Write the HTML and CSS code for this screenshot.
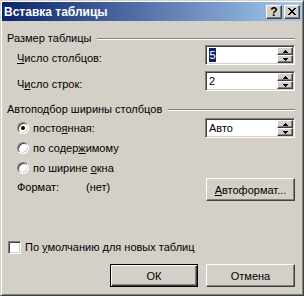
FILE: index.html
```html
<!DOCTYPE html>
<html lang="ru">
<head>
  <meta charset="UTF-8">
  <meta name="viewport" content="width=device-width, initial-scale=1.0">
  <title>Вставка таблицы</title>
  <link rel="stylesheet" href="styles.css">
</head>
<body>
  <div class="dialog">
    <div class="titlebar">
      <span class="title">Вставка таблицы</span>
      <div class="caption-btns">
        <span class="cap-btn help">?</span>
        <span class="cap-btn close">
          <svg width="8" height="7" viewBox="0 0 8 7" shape-rendering="crispEdges">
            <rect x="0" y="0" width="2" height="1"/><rect x="6" y="0" width="2" height="1"/>
            <rect x="1" y="1" width="2" height="1"/><rect x="5" y="1" width="2" height="1"/>
            <rect x="2" y="2" width="4" height="1"/>
            <rect x="3" y="3" width="2" height="1"/>
            <rect x="2" y="4" width="4" height="1"/>
            <rect x="1" y="5" width="2" height="1"/><rect x="5" y="5" width="2" height="1"/>
            <rect x="0" y="6" width="2" height="1"/><rect x="6" y="6" width="2" height="1"/>
          </svg>
        </span>
      </div>
    </div>

    <div class="content">
      <div class="group-head"><span>Размер таблицы</span><span class="etch"></span></div>

      <div class="field-row">
        <span class="label"><u>Ч</u>исло столбцов:</span>
        <div class="spin">
          <span class="value"><span class="sel">5</span></span>
          <div class="spin-btns">
            <span class="spin-btn"><svg width="5" height="3" shape-rendering="crispEdges"><rect x="2" y="0" width="1" height="1"/><rect x="1" y="1" width="3" height="1"/><rect x="0" y="2" width="5" height="1"/></svg></span>
            <span class="spin-btn"><svg width="5" height="3" shape-rendering="crispEdges"><rect x="0" y="0" width="5" height="1"/><rect x="1" y="1" width="3" height="1"/><rect x="2" y="2" width="1" height="1"/></svg></span>
          </div>
        </div>
      </div>

      <div class="field-row second">
        <span class="label">Ч<u>и</u>сло строк:</span>
        <div class="spin">
          <span class="value">2</span>
          <div class="spin-btns">
            <span class="spin-btn"><svg width="5" height="3" shape-rendering="crispEdges"><rect x="2" y="0" width="1" height="1"/><rect x="1" y="1" width="3" height="1"/><rect x="0" y="2" width="5" height="1"/></svg></span>
            <span class="spin-btn"><svg width="5" height="3" shape-rendering="crispEdges"><rect x="0" y="0" width="5" height="1"/><rect x="1" y="1" width="3" height="1"/><rect x="2" y="2" width="1" height="1"/></svg></span>
          </div>
        </div>
      </div>

      <div class="group-head second-group"><span>Автоподбор ширины столбцов</span><span class="etch"></span></div>

      <div class="radio-row first-radio">
        <label class="radio-label"><span class="radio checked"></span><span>посто<u>я</u>нная:</span></label>
        <div class="spin">
          <span class="value">Авто</span>
          <div class="spin-btns">
            <span class="spin-btn"><svg width="5" height="3" shape-rendering="crispEdges"><rect x="2" y="0" width="1" height="1"/><rect x="1" y="1" width="3" height="1"/><rect x="0" y="2" width="5" height="1"/></svg></span>
            <span class="spin-btn"><svg width="5" height="3" shape-rendering="crispEdges"><rect x="0" y="0" width="5" height="1"/><rect x="1" y="1" width="3" height="1"/><rect x="2" y="2" width="1" height="1"/></svg></span>
          </div>
        </div>
      </div>
      <div class="radio-row">
        <label class="radio-label"><span class="radio"></span><span>по содер<u>ж</u>имому</span></label>
      </div>
      <div class="radio-row">
        <label class="radio-label"><span class="radio"></span><span>по ширине <u>о</u>кна</span></label>
      </div>

      <div class="format-row">
        <span class="format-label">Формат:</span>
        <span class="format-value">(нет)</span>
        <button class="btn autoformat"><u>А</u>втоформат...</button>
      </div>

      <label class="check-row"><span class="checkbox"></span><span>По <u>у</u>молчанию для новых таблиц</span></label>

      <div class="actions">
        <button class="btn default">ОК</button>
        <button class="btn">Отмена</button>
      </div>
    </div>
  </div>
</body>
</html>
```

FILE: styles.css
```css
body {
  margin: 0;
  font-family: "Liberation Sans", Arial, sans-serif;
  font-size: 11px;
  color: #000;
  background-color: #d4d0c8;
}
.dialog {
  width: 304px;
  height: 296px;
  box-sizing: border-box;
  padding: 1px;
  background-color: #d4d0c8;
  border-top: 1px solid #d4d0c8;
  border-left: 1px solid #d4d0c8;
  border-right: 1px solid #404040;
  border-bottom: 1px solid #404040;
  box-shadow: inset 1px 1px #fff, inset -1px -1px #808080;
}
.titlebar {
  height: 19px;
  display: flex;
  align-items: center;
  justify-content: space-between;
  padding: 0 2px 0 2px;
  background: linear-gradient(to right, #0a246a, #a6caf0);
}
.title {
  color: #fff;
  font-weight: bold;
  font-size: 12px;
}
.caption-btns {
  display: flex;
  gap: 2px;
}
.cap-btn {
  width: 16px;
  height: 14px;
  box-sizing: border-box;
  display: flex;
  align-items: center;
  justify-content: center;
  background-color: #d4d0c8;
  border-top: 1px solid #fff;
  border-left: 1px solid #fff;
  border-right: 1px solid #404040;
  border-bottom: 1px solid #404040;
  box-shadow: inset -1px -1px #808080;
}
.help {
  font-weight: bold;
  font-size: 12px;
  line-height: 12px;
}
.close svg {
  fill: #000;
}
.content {
  padding: 11px 7px 0 5px;
}
.group-head {
  height: 13px;
  line-height: 13px;
  display: flex;
  align-items: center;
  gap: 6px;
}
.etch {
  flex: 1;
  height: 0;
  border-top: 1px solid #808080;
  border-bottom: 1px solid #fff;
}
.second-group {
  margin-top: 12px;
}
.field-row {
  display: flex;
  justify-content: space-between;
  align-items: flex-start;
  padding-left: 10px;
}
.field-row.second {
  margin-top: 6px;
}
.label {
  line-height: 13px;
  padding-top: 7px;
}
.spin {
  width: 90px;
  height: 20px;
  box-sizing: border-box;
  display: flex;
  background-color: #fff;
  border-top: 1px solid #808080;
  border-left: 1px solid #808080;
  border-right: 1px solid #fff;
  border-bottom: 1px solid #fff;
  box-shadow: inset 1px 1px #404040, inset -1px -1px #d4d0c8;
  padding: 1px;
}
.value {
  flex: 1;
  display: flex;
  align-items: center;
  padding-left: 2px;
  line-height: 14px;
}
.sel {
  display: inline-block;
  height: 14px;
  padding: 0 0.5px;
  background-color: #0a246a;
  color: #fff;
}
.spin-btns {
  width: 16px;
  display: flex;
  flex-direction: column;
}
.spin-btn {
  flex: 1;
  box-sizing: border-box;
  display: flex;
  align-items: center;
  justify-content: center;
  background-color: #d4d0c8;
  border-top: 1px solid #fff;
  border-left: 1px solid #fff;
  border-right: 1px solid #404040;
  border-bottom: 1px solid #404040;
  box-shadow: inset -1px -1px #808080;
}
.spin-btn svg {
  fill: #000;
}
.radio-row {
  height: 20px;
  display: flex;
  align-items: center;
  justify-content: space-between;
  padding-left: 10px;
}
.first-radio {
  margin-top: 2px;
}
.radio-label {
  display: flex;
  align-items: center;
  gap: 4px;
  line-height: 13px;
}
.radio {
  width: 12px;
  height: 12px;
  box-sizing: border-box;
  border-radius: 50%;
  background-color: #fff;
  border-top: 1px solid #808080;
  border-left: 1px solid #808080;
  border-right: 1px solid #fff;
  border-bottom: 1px solid #fff;
  box-shadow: inset 1px 1px #404040, inset -1px -1px #d4d0c8;
  display: flex;
  align-items: center;
  justify-content: center;
}
.radio.checked::after {
  content: "";
  width: 4px;
  height: 4px;
  border-radius: 50%;
  background-color: #000;
}
.format-row {
  height: 23px;
  display: flex;
  align-items: flex-start;
  padding-left: 10px;
  line-height: 13px;
}
.format-label {
  width: 69px;
  padding-top: 3px;
}
.format-value {
  flex: 1;
  padding-top: 3px;
}
.btn {
  width: 89px;
  height: 23px;
  box-sizing: border-box;
  padding: 0;
  font-family: "Liberation Sans", Arial, sans-serif;
  font-size: 11px;
  color: #000;
  background-color: #d4d0c8;
  border-top: 1px solid #fff;
  border-left: 1px solid #fff;
  border-right: 1px solid #404040;
  border-bottom: 1px solid #404040;
  box-shadow: inset -1px -1px #808080;
}
.btn.default {
  width: 88px;
  border: 1px solid #000;
  box-shadow: inset 1px 1px #fff, inset -1px -1px #404040, inset -2px -2px #808080;
}
.check-row {
  margin-top: 40px;
  margin-left: 1px;
  height: 13px;
  display: flex;
  align-items: center;
  gap: 4px;
  line-height: 13px;
}
.checkbox {
  width: 13px;
  height: 13px;
  box-sizing: border-box;
  background-color: #fff;
  border-top: 1px solid #808080;
  border-left: 1px solid #808080;
  border-right: 1px solid #fff;
  border-bottom: 1px solid #fff;
  box-shadow: inset 1px 1px #404040, inset -1px -1px #d4d0c8;
}
.actions {
  margin-top: 10px;
  display: flex;
  justify-content: flex-end;
  gap: 8px;
}
```
